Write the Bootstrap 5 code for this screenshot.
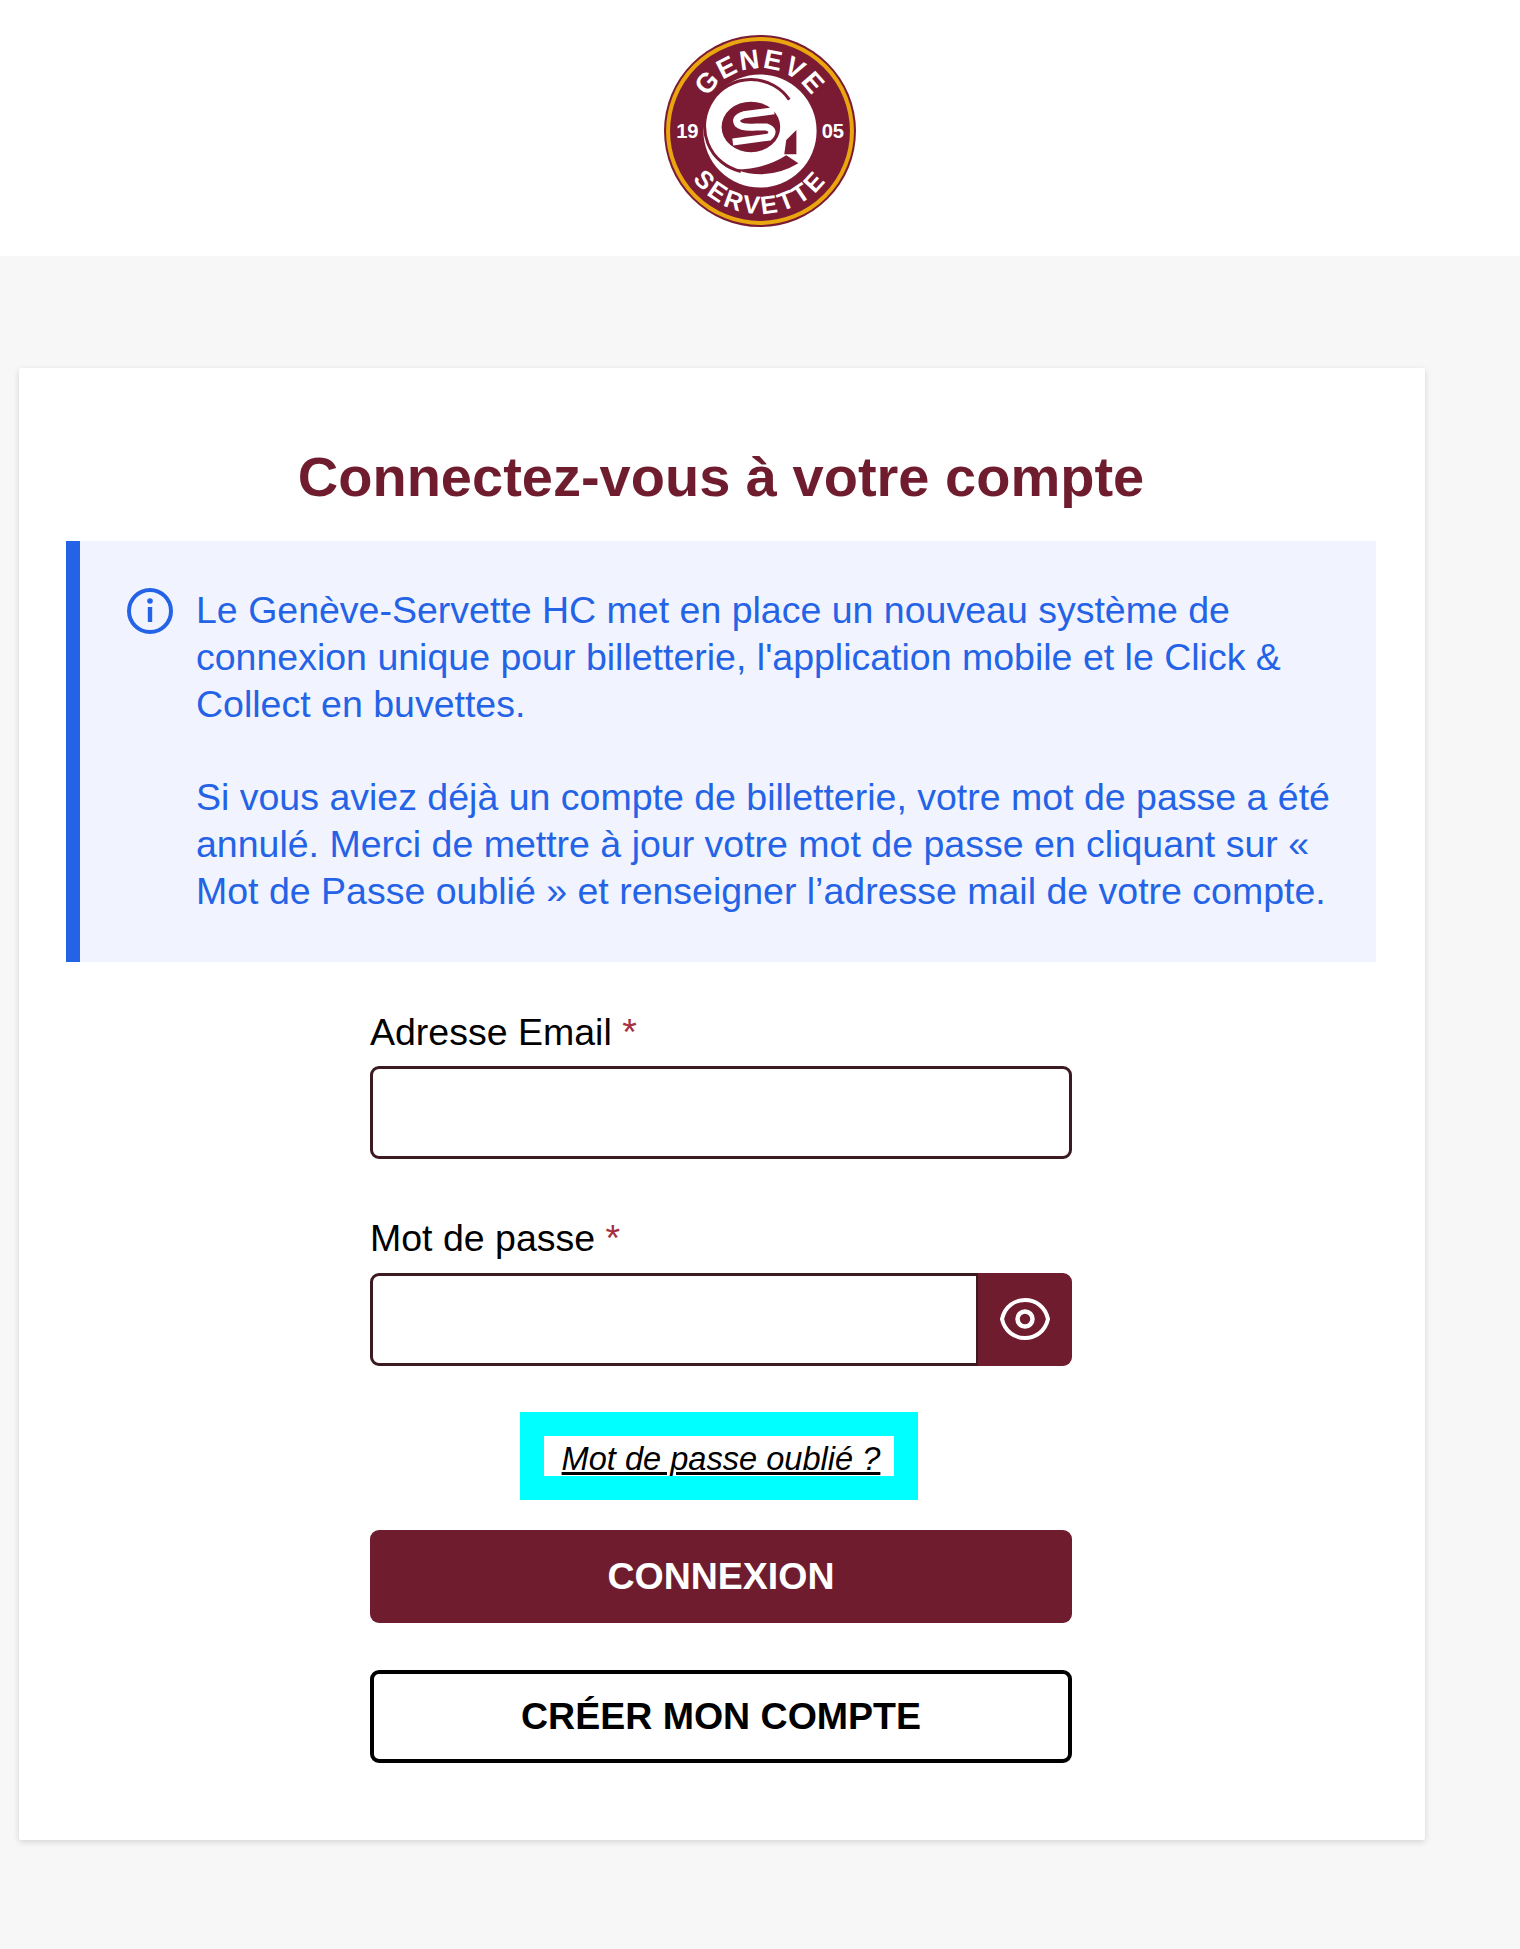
<!DOCTYPE html>
<html lang="fr">
  <head>
    <meta charset="UTF-8" />
    <meta name="viewport" content="width=device-width, initial-scale=1.0" />
    <title>Connexion</title>
    <link
      rel="stylesheet"
      href="https://cdn.jsdelivr.net/npm/bootstrap@5.3.3/dist/css/bootstrap.min.css"
    />
    <style>
      body {
        background-color: #f7f7f8;
        font-family: "Liberation Sans", Arial, sans-serif;
        min-height: 1949px;
      }
      .site-head {
        height: 256px;
        padding-top: 5px;
        background: #fff;
      }
      .login-wrap {
        padding: 112px 0 0 19px;
      }
      .login-box {
        width: 1406px;
        border: 0;
        border-radius: 2px;
        padding: 0 49px 77px 47px;
        box-shadow: 0 2px 6px rgba(0, 0, 0, 0.14);
      }
      .login-title {
        margin: 0;
        padding: 78px 0 34px;
        font-size: 56px;
        line-height: 61px;
        font-weight: 700;
        color: #6f1d2e;
      }
      .info-box {
        background: #f1f4fe;
        border-left: 14px solid #2563e6;
        padding: 46px 20px 47px 47px;
        color: #2563e6;
        font-size: 37.5px;
        line-height: 46.8px;
        gap: 23px;
      }
      .info-box svg {
        flex: none;
        margin-top: 1px;
      }
      .login-form {
        width: 702px;
        margin: 47px auto 0;
      }
      .field-label {
        display: block;
        margin: 0 0 11px;
        color: #000;
        font-size: 37.5px;
        line-height: 46px;
      }
      .pass-label {
        margin-top: 56px;
        margin-bottom: 12px;
      }
      .req {
        color: #a5303f;
      }
      .field-input {
        height: 93px;
        border: 3px solid #3b1a22;
        border-radius: 9px;
        background: #fff;
      }
      .eye-btn {
        width: 94px;
        background: #6f1d2e;
        border: 0;
        border-radius: 0 9px 9px 0;
      }
      .forgot-link {
        display: inline-block;
        margin: 70px 4px 54px 0;
        padding: 0 14px 0 18px;
        height: 40px;
        line-height: 46px;
        background: #fff;
        outline: 24px solid #00ffff;
        color: #000;
        font-size: 32.6px;
        font-style: italic;
      }
      .main-btn,
      .alt-btn {
        height: 93px;
        border-radius: 9px;
        font-size: 37.5px;
        font-weight: 700;
        padding: 0;
      }
      .main-btn {
        background: #6f1d2e;
        border: 0;
        color: #fff;
      }
      .alt-btn {
        margin-top: 47px;
        background: #fff;
        border: 4px solid #000;
        color: #000;
      }
    </style>
  </head>
  <body>
    <header class="site-head d-flex justify-content-center align-items-center">
      <svg width="194" height="194" viewBox="0 0 192 192">
        <defs>
          <path id="arcTop" d="M 34 96 A 62 62 0 0 1 158 96" />
          <path id="arcBottom" d="M 14 96 A 82 82 0 0 0 178 96" />
        </defs>
        <circle cx="96" cy="96" r="95" fill="#7a1a33" />
        <circle cx="96" cy="96" r="91" fill="#7a1a33" stroke="#eaa60e" stroke-width="4" />
        <text font-family="Liberation Sans" font-weight="700" font-size="27" fill="#fff" text-anchor="middle" letter-spacing="2">
          <textPath href="#arcTop" startOffset="50%">GENEVE</textPath>
        </text>
        <text font-family="Liberation Sans" font-weight="700" font-size="25" fill="#fff" text-anchor="middle" letter-spacing="3">
          <textPath href="#arcBottom" startOffset="50%">SERVETTE</textPath>
        </text>
        <text x="13" y="103" font-family="Liberation Sans" font-weight="700" font-size="20" fill="#fff">19</text>
        <text x="157" y="103" font-family="Liberation Sans" font-weight="700" font-size="20" fill="#fff">05</text>
        <!-- badge centre -->
        <circle cx="96" cy="96" r="56" fill="#fff" />
        <path d="M 125 65 A 46 46 0 1 0 77 136" fill="none" stroke="#7a1a33" stroke-width="3" />
        <path d="M 72 134 Q 104 146 134 128 L 122 120 Q 100 134 72 134 Z" fill="#7a1a33" />
        <ellipse cx="87" cy="92" rx="29" ry="25" fill="#7a1a33" />
        <path d="M 110 76 L 80 80 Q 70 83 74 89 Q 78 93 92 92 L 102 92 Q 112 95 105 102 L 69 107" fill="none" stroke="#fff" stroke-width="7" />
        <path d="M 122 105 L 132 95 L 132 119 L 120 119 Z" fill="#7a1a33" />
      </svg>
    </header>

    <main class="login-wrap">
      <div class="card login-box">
        <h1 class="login-title text-center">Connectez-vous à votre compte</h1>

        <div class="info-box d-flex">
          <svg width="46" height="46" viewBox="0 0 46 46">
            <circle cx="23" cy="23" r="21" fill="none" stroke="#2563e6" stroke-width="4" />
            <circle cx="23" cy="13" r="2.8" fill="#2563e6" />
            <rect x="20.8" y="19" width="4.4" height="15" fill="#2563e6" />
          </svg>
          <div>
            Le Genève-Servette HC met en place un nouveau système de<br />
            connexion unique pour billetterie, l'application mobile et le Click &amp;<br />
            Collect en buvettes.<br />
            <br />
            Si vous aviez déjà un compte de billetterie, votre mot de passe a été<br />
            annulé. Merci de mettre à jour votre mot de passe en cliquant sur «<br />
            Mot de Passe oublié » et renseigner l’adresse mail de votre compte.
          </div>
        </div>

        <form class="login-form">
          <label class="field-label" for="email">Adresse Email <span class="req">*</span></label>
          <input id="email" type="email" class="form-control field-input" />

          <label class="field-label pass-label" for="password">Mot de passe <span class="req">*</span></label>
          <div class="input-group">
            <input id="password" type="password" class="form-control field-input" />
            <button type="button" class="btn eye-btn d-flex align-items-center justify-content-center" aria-label="Afficher">
              <svg width="52" height="44" viewBox="0 0 52 44">
                <path d="M3 22 C 6 9 16 3 26 3 C 36 3 46 9 49 22 C 46 35 36 41 26 41 C 16 41 6 35 3 22 Z" fill="none" stroke="#fff" stroke-width="4" />
                <circle cx="26" cy="22" r="7.5" fill="none" stroke="#fff" stroke-width="4.5" />
              </svg>
            </button>
          </div>

          <div class="text-center">
            <a href="#" class="forgot-link">Mot de passe oublié ?</a>
          </div>

          <button type="button" class="btn main-btn w-100">CONNEXION</button>
          <button type="button" class="btn alt-btn w-100">CRÉER MON COMPTE</button>
        </form>
      </div>
    </main>
  </body>
</html>
